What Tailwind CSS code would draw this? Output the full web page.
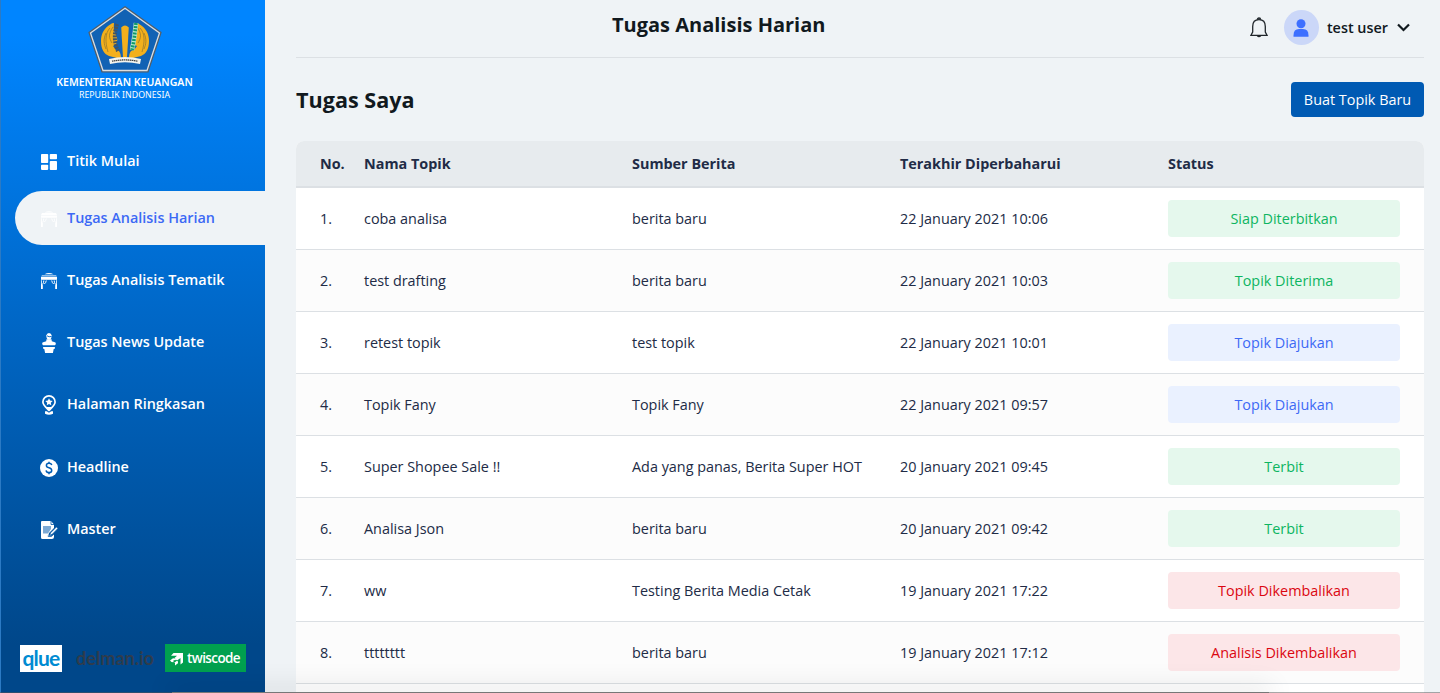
<!DOCTYPE html>
<html lang="id">
<head>
<meta charset="utf-8">
<title>Tugas Analisis Harian</title>
<script src="https://cdn.jsdelivr.net/npm/@tailwindcss/browser@4"></script>
</head>
<body class="relative flex h-[693px] overflow-hidden bg-[#eff3f6] font-['Open_Sans',sans-serif] text-[14.400px] leading-5 text-[#212b46]">

<aside class="flex h-full w-[265px] shrink-0 flex-col border-l border-[#2c7ac4] bg-linear-to-b from-[#0085ff] from-5% to-[#00478a] to-93%">
  <div class="flex h-[134px] flex-col items-center pr-[17px] pt-[6px] text-white">
    <svg width="74" height="67" viewBox="0 0 74 67">
      <path d="M37 .8 73 26.500 60 65.800H14L1 26.500Z" fill="#1162b4" stroke="#555d64" stroke-width="1.200"/>
      <path d="M37 2.300 71.500 27 59 64.500H15L2.500 27Z" fill="none" stroke="#ddd" stroke-width="1.300"/>
      <g fill="#f3b01c">
        <path d="M26 17c-3 0-4 2-6 3-5 4-7 9-7 15 0 8 3 13 8 15l12 3c0-5-1-9-5-9l-3-4c3-1 5-4 4-8s-4-6-3-15Z"/>
        <path d="M48 17c3 0 4 2 6 3 5 4 7 9 7 15 0 8-3 13-8 15l-12 3c0-5 1-9 5-9l3-4c-3-1-5-4-4-8s4-6 3-15Z"/>
        <path d="M33.200 21.500q3.800-4 7.600 0L39 51h-4Z"/>
      </g>
      <path d="M22 22c-5 5-5 14-2 24M18 27c-3 7-2 11 0 16M25 21c-5 7-4 11-1 16M52 22c5 5 5 14 2 24M56 27c3 7 2 11 0 16M49 21c5 7 4 11 1 16" fill="none" stroke="#8e722c" stroke-width=".7"/>
      <path d="M29 18c-3 9-3 19 1 27" fill="none" stroke="#435463" stroke-width="4" stroke-dasharray="2 .9"/>
      <path d="M48 17c-1 9-2 19-4 27" fill="none" stroke="#bce8cd" stroke-width="4.600"/>
      <path d="M48 17c-1 9-2 19-4 27" fill="none" stroke="#119b69" stroke-width="3.600" stroke-dasharray="2 1.200"/>
      <path d="m21 53q16-4 32 0l-1 5q-15-3.500-30 0Z" fill="#f5f5ee"/>
      <path d="M24 55.200q13-2.500 26 0" fill="none" stroke="#444" stroke-width="1.300" stroke-dasharray="1.500 .5"/>
    </svg>
    <div class="mt-[3px] whitespace-nowrap text-[10.550px] font-semibold leading-[13px] font-['Noto_Sans',sans-serif]">KEMENTERIAN KEUANGAN</div>
    <div class="whitespace-nowrap text-[8.800px] leading-[12px] font-['Noto_Sans',sans-serif]">REPUBLIK INDONESIA</div>
  </div>

  <nav class="flex flex-col gap-2 pl-[14px] font-semibold text-white">
    <a class="-mb-[5px] flex h-[54px] items-center gap-2 pl-6">
      <svg class="mt-0.5" width="20" height="20" viewBox="0 0 20 20" fill="#fff"><rect x="2" y="2" width="7.200" height="9" rx=".8"/><rect x="10.800" y="2" width="7.200" height="5.200" rx=".8"/><rect x="2" y="12.700" width="7.200" height="5.200" rx=".8"/><rect x="10.800" y="9" width="7.200" height="9" rx=".8"/></svg>
      <span>Titik Mulai</span>
    </a>
    <a class="flex h-[54px] items-center gap-2 rounded-l-full bg-[#eff3f6] pl-6 text-[#3c69f5]">
      <svg class="mt-0.5" width="20" height="20" viewBox="0 0 20 20" fill="#fff"><path d="M5.500 3.500Q10 .8 14.500 3.500ZM3 4h14l1 2H2ZM2 6.500h16v2.300H2Z"/><path d="M2 9.300h.8v3.700l1 1.300V18H2ZM18 9.300h-.8v3.700l-1 1.300V18H18Z"/><path d="M4.800 9.500q.1 2-1.300 4M7.300 9.500q-.5 2.600-2 3.500M15.200 9.500q-.1 2 1.300 4M12.700 9.500q.5 2.600 2 3.500" fill="none" stroke="#fff"/></svg>
      <span>Tugas Analisis Harian</span>
    </a>
    <a class="flex h-[54px] items-center gap-2 pl-6">
      <svg class="mt-0.5" width="20" height="20" viewBox="0 0 20 20" fill="#fff"><path d="M5.500 3.300Q10 .8 14.500 3.300Z"/><path d="M3 4.200h14l1 1.300H2Z" opacity=".75"/><path d="M2 6h16v2.800H2Z"/><path d="M2 9.300h.8v3.700l1 1.300V18H2ZM18 9.300h-.8v3.700l-1 1.300V18H18Z"/><path d="M4.800 9.500q.1 2-1.300 4M7.300 9.500q-.5 2.600-2 3.500M15.200 9.500q-.1 2 1.300 4M12.700 9.500q.5 2.600 2 3.500" fill="none" stroke="#fff"/></svg>
      <span>Tugas Analisis Tematik</span>
    </a>
    <a class="flex h-[54px] items-center gap-2 pl-6">
      <svg class="mt-0.5" width="20" height="22" viewBox="0 0 20 22" fill="#fff"><path d="M7.300 3.500Q7.700 1 10 1t2.700 2.500l-.4 2.400q-.4 1.800-2.300 1.800T7.700 5.900Z"/><path d="M8 3.800q2 1.600 4.500.6" fill="none" stroke="#0063c4" stroke-width=".9"/><path d="M7.500 7.300h5l.3 2 3.700 1.200q1 1.500-.5 2.700H4Q2.500 12 3.500 10.500l3.700-1.200Z"/><path d="M4 15h12l-.4 2H4.400ZM5.300 17h9.400l-.8 4H6.100Z"/></svg>
      <span>Tugas News Update</span>
    </a>
    <a class="flex h-[54px] items-center gap-2 pl-6">
      <svg class="mt-0.5" width="20" height="22" viewBox="0 0 20 22"><path d="M10 1.900a6.100 6.100 0 0 0-6.100 6.100c0 3 2.800 5.100 6.100 8.400 3.300-3.300 6.100-5.400 6.100-8.400A6.100 6.100 0 0 0 10 1.900Z" fill="none" stroke="#fff" stroke-width="1.700"/><path d="m6.500 13 3.500 3.500 3.500-3.500Z" fill="#fff"/><path d="m10 4.200 1.100 2.400 2.600.3-1.900 1.800.5 2.600L10 10l-2.300 1.300.5-2.600-1.900-1.800 2.600-.3Z" fill="#fff"/><path d="M6 17.300h1.800l2.200 1.500 2.200-1.500H14v2.500q-4 1.800-8 0Z" fill="#fff"/></svg>
      <span>Halaman Ringkasan</span>
    </a>
    <a class="mt-px flex h-[54px] items-center gap-2 pl-6">
      <svg class="mt-0.5" width="20" height="20" viewBox="0 0 20 20"><circle cx="10" cy="10" r="9" fill="#fff"/><path d="M12.800 7.100Q12.200 5.300 10 5.300 7.400 5.300 7.400 7.500 7.400 9.200 10 9.800 12.700 10.400 12.700 12.400 12.700 14.600 10 14.600 7.400 14.600 7.100 12.400M10 3.700v2M10 14.300v2" fill="none" stroke="#005db5" stroke-width="1.500"/></svg>
      <span>Headline</span>
    </a>
    <a class="flex h-[54px] items-center gap-2 pl-6">
      <svg class="mt-0.5" width="20" height="20" viewBox="0 0 20 20"><path d="M3 1h9l3 3.500V8l-5 5-1 4h3l3-2.500V17q0 2-2 2H3.500Q2 19 2 17.500V2q0-1 1-1Z" fill="#fff"/><path d="M4 6h8v3l-3 4.500H4Z" fill="#7ca9d4"/><path d="M12 1v3.500h3" fill="none" stroke="#0055a5" stroke-width=".8"/><path d="m10.700 15.300 1-2.500L17.400 7l1.500 1.400-5.700 5.900Z" fill="#fff" stroke="#0055a5" stroke-width=".6"/><path d="M8.500 16h4" stroke="#7ca9d4"/></svg>
      <span>Master</span>
    </a>
  </nav>

  <div class="mt-auto mb-[21px] flex h-7 items-center pl-[19px]">
    <div class="mt-px flex h-[27px] w-[42px] items-center justify-center bg-white pb-[2px] font-['Lato',sans-serif] text-[21px] leading-[24px] font-bold tracking-[-0.800px] text-[#008bd2]">qlue</div>
    <div class="ml-[14px] w-[80px] whitespace-nowrap text-[18px] leading-none font-['Lato',sans-serif] font-bold text-[#2f3c4c]">delman.io</div>
    <div class="ml-[9px] flex h-7 w-[81px] items-center bg-[#00a04f] pl-[5px] text-white">
      <svg class="mt-px shrink-0" width="14" height="14" viewBox="0 0 14 14" fill="#fff"><path d="M3.500 1H13v9.500l-2.500 2V6L7 8.500 4.500 6 7 3.800H1Z"/><path d="M0 8.500 3 6.200l2 .3L6.500 8l-3 .3v2L1.500 10ZM4 11l2.500-2L8 9.300v2L5 13.500V11Z"/></svg>
      <span class="ml-[3px] mt-[2px] text-[13.500px] leading-none tracking-[-0.600px] font-semibold">twiscode</span>
    </div>
  </div>
</aside>

<main class="flex flex-1 flex-col pl-[31px] pr-4 text-[#11191e]">
  <header class="flex h-[58px] shrink-0 border-b border-[#dce0e4]">
    <div class="w-[316px]"></div>
    <h1 class="flex-1 pt-[10px] whitespace-nowrap text-xl leading-[30px] font-bold">Tugas Analisis Harian</h1>
    <div class="flex h-[55px] items-center pr-[14px]">
      <svg width="18" height="22" viewBox="0 0 18 22" fill="none" stroke="#20262b" stroke-width="1.300"><path d="M1 18.300h16L15.300 15V9.500C15.300 5.500 13 2.700 9 2.700S2.700 5.500 2.700 9.500V15Z"/><path d="M7.500 2.700Q7.500 1 9 1t1.500 1.700M7.300 18.500q1.700 2 3.400 0" stroke-width="1.500"/></svg>
      <div class="ml-4 flex size-[35px] items-center justify-center rounded-full bg-[#cbd7f8]">
        <svg width="16" height="18" viewBox="0 0 16 18" fill="#3d6fff"><circle cx="8" cy="4.700" r="4.500"/><path d="M.5 17.800v-1.500Q.5 10 6 10h4q5.500 0 5.500 6.300v1.500Z"/></svg>
      </div>
      <span class="ml-2 font-semibold">test user</span>
      <svg class="ml-[9px]" width="13" height="9" viewBox="0 0 13 9" fill="none" stroke="#11191e" stroke-width="2.200"><path d="m1 1.500 5.500 5.500L12 1.500"/></svg>
    </div>
  </header>

  <div class="mt-6 flex h-[35px] shrink-0 items-center justify-between">
    <h2 class="text-[21.600px] font-bold">Tugas Saya</h2>
    <button class="h-[35px] w-[133px] whitespace-nowrap rounded bg-[#005ab3] font-medium text-white">Buat Topik Baru</button>
  </div>

  <section class="mt-6 h-[552px] w-[1128px] shrink-0 overflow-hidden rounded-t-lg bg-white text-[#212b46]">
    <div class="grid h-[47px] grid-cols-[44px_268px_268px_268px_232px] items-center border-b-2 border-[#dce0e4] bg-[#e7ebee] px-6 font-bold"><div>No.</div><div>Nama Topik</div><div>Sumber Berita</div><div>Terakhir Diperbaharui</div><div>Status</div></div>
    <div class="grid h-[62px] grid-cols-[44px_268px_268px_268px_232px] items-center border-b border-[#dce0e4] bg-white px-6"><div>1.</div><div>coba analisa</div><div>berita baru</div><div>22 January 2021 10:06</div><div class="flex h-[37px] items-center justify-center rounded bg-[#e5f8ed] text-[#0db561]">Siap Diterbitkan</div></div>
    <div class="grid h-[62px] grid-cols-[44px_268px_268px_268px_232px] items-center border-b border-[#dce0e4] bg-[#fcfcfc] px-6"><div>2.</div><div>test drafting</div><div>berita baru</div><div>22 January 2021 10:03</div><div class="flex h-[37px] items-center justify-center rounded bg-[#e5f8ed] text-[#0db561]">Topik Diterima</div></div>
    <div class="grid h-[62px] grid-cols-[44px_268px_268px_268px_232px] items-center border-b border-[#dce0e4] bg-white px-6"><div>3.</div><div>retest topik</div><div>test topik</div><div>22 January 2021 10:01</div><div class="flex h-[37px] items-center justify-center rounded bg-[#eaf1ff] text-[#3d69f5]">Topik Diajukan</div></div>
    <div class="grid h-[62px] grid-cols-[44px_268px_268px_268px_232px] items-center border-b border-[#dce0e4] bg-[#fcfcfc] px-6"><div>4.</div><div>Topik Fany</div><div>Topik Fany</div><div>22 January 2021 09:57</div><div class="flex h-[37px] items-center justify-center rounded bg-[#eaf1ff] text-[#3d69f5]">Topik Diajukan</div></div>
    <div class="grid h-[62px] grid-cols-[44px_268px_268px_268px_232px] items-center border-b border-[#dce0e4] bg-white px-6"><div>5.</div><div>Super Shopee Sale !!</div><div>Ada yang panas, Berita Super HOT</div><div>20 January 2021 09:45</div><div class="flex h-[37px] items-center justify-center rounded bg-[#e5f8ed] text-[#0db561]">Terbit</div></div>
    <div class="grid h-[62px] grid-cols-[44px_268px_268px_268px_232px] items-center border-b border-[#dce0e4] bg-[#fcfcfc] px-6"><div>6.</div><div>Analisa Json</div><div>berita baru</div><div>20 January 2021 09:42</div><div class="flex h-[37px] items-center justify-center rounded bg-[#e5f8ed] text-[#0db561]">Terbit</div></div>
    <div class="grid h-[62px] grid-cols-[44px_268px_268px_268px_232px] items-center border-b border-[#dce0e4] bg-white px-6"><div>7.</div><div>ww</div><div>Testing Berita Media Cetak</div><div>19 January 2021 17:22</div><div class="flex h-[37px] items-center justify-center rounded bg-[#fce6e8] text-[#db0610]">Topik Dikembalikan</div></div>
    <div class="grid h-[62px] grid-cols-[44px_268px_268px_268px_232px] items-center border-b border-[#dce0e4] bg-[#fcfcfc] px-6"><div>8.</div><div>tttttttt</div><div>berita baru</div><div>19 January 2021 17:12</div><div class="flex h-[37px] items-center justify-center rounded bg-[#fce6e8] text-[#db0610]">Analisis Dikembalikan</div></div>
  </section>
</main>

<!-- Shadow and dark edge along the bottom of the window -->
<div class="absolute inset-x-0 bottom-0 h-10 overflow-hidden">
  <div class="absolute bottom-0 left-0 h-px w-full bg-[#555]/50"></div>
  <div class="absolute bottom-0 left-[172px] h-px w-[1097px] bg-[#777] shadow-[0_0_26px_3px_rgba(0,0,0,0.200)]"></div>
</div>
</body>
</html>
